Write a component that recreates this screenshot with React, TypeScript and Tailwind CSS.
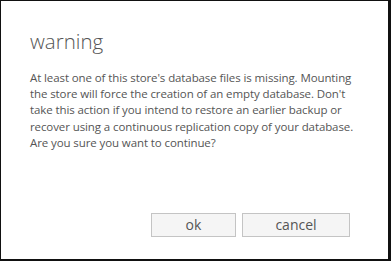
import React from "react";

export default function App() {
  return (
    <div
      className="w-[391px] h-[261px] bg-white border-l border-t border-r-[3px] border-b-2 border-[#111] flex flex-col"
      style={{ fontFamily: '"Open Sans", "Noto Sans", sans-serif' }}
    >
      <div className="pl-[29px] pt-[26px] text-[20.5px] leading-[28px] font-light text-[#555]">
        warning
      </div>
      <div className="pl-[29px] pt-[15px] text-[11.5px] leading-[16.2px] text-[#555] whitespace-nowrap tracking-[-0.1px]">
        At least one of this store's database files is missing. Mounting
        <br />
        the store will force the creation of an empty database. Don't
        <br />
        take this action if you intend to restore an earlier backup or
        <br />
        recover using a continuous replication copy of your database.
        <br />
        Are you sure you want to continue?
      </div>
      <div className="flex-1" />
      <div className="flex justify-end gap-[6px] pr-[38px] pb-[22px]">
        <button className="w-[85px] h-[24px] bg-[#f5f5f5] border border-[#c4c4c4] text-[14px] text-[#555] leading-none">
          ok
        </button>
        <button className="w-[108px] h-[24px] bg-[#f5f5f5] border border-[#c4c4c4] text-[14px] text-[#555] leading-none">
          cancel
        </button>
      </div>
    </div>
  );
}
